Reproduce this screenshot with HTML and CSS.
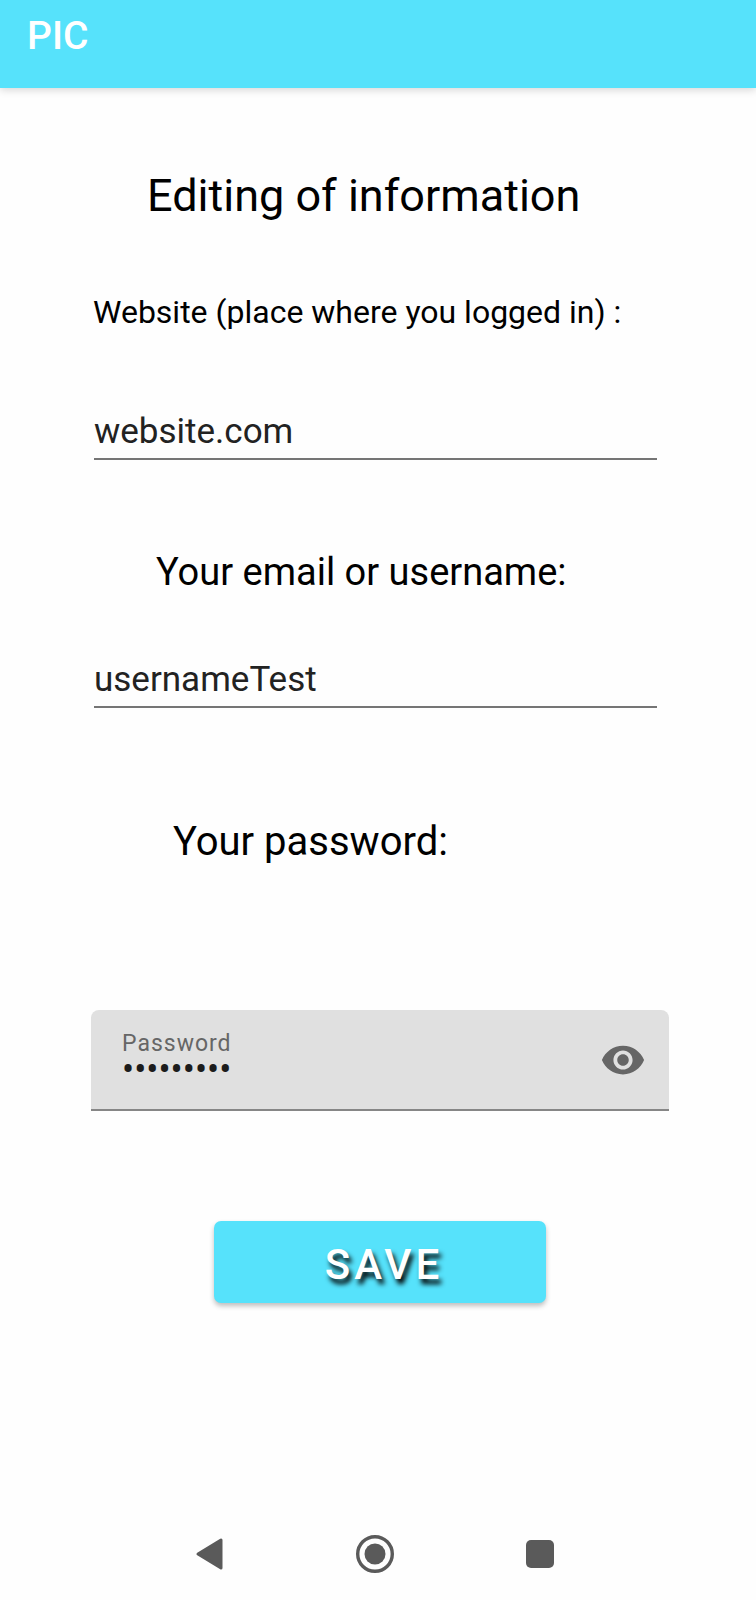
FILE: index.html
```html
<!DOCTYPE html>
<html lang="en">
<head>
<meta charset="utf-8">
<meta name="viewport" content="width=device-width, initial-scale=1">
<title>PIC</title>
<link rel="stylesheet" href="styles.css">
</head>
<body>
<header class="app-bar">
  <span class="app-title">PIC</span>
</header>
<main class="content">
  <h1 class="heading">Editing of information</h1>
  <form class="form">
    <div class="field">
      <label class="label label-website" for="website">Website (place where you logged in) :</label>
      <input class="line-input" id="website" type="text" value="website.com">
    </div>
    <div class="field">
      <label class="label label-username" for="username">Your email or username:</label>
      <input class="line-input" id="username" type="text" value="usernameTest" autocomplete="off">
    </div>
    <h2 class="label label-password">Your password:</h2>
    <div class="password-box">
      <div class="password-field">
        <label class="password-label" for="password">Password</label>
        <input class="password-input" id="password" type="password" value="secret123" autocomplete="off">
      </div>
      <button class="eye-button" type="button" aria-label="Show password">
        <svg class="eye-icon" viewBox="0 0 24 24" aria-hidden="true"><path d="M12 4.500C7 4.500 2.730 7.610 1 12c1.730 4.390 6 7.500 11 7.500s9.270-3.110 11-7.500c-1.730-4.390-6-7.500-11-7.500zM12 17c-2.760 0-5-2.240-5-5s2.240-5 5-5 5 2.240 5 5-2.240 5-5 5zm0-8c-1.660 0-3 1.340-3 3s1.340 3 3 3 3-1.340 3-3-1.340-3-3-3z"/></svg>
      </button>
    </div>
    <button class="save-button" type="submit">SAVE</button>
  </form>
</main>
<nav class="nav-bar" aria-label="System">
  <button class="nav-button" type="button" aria-label="Back">
    <svg class="nav-icon" viewBox="0 0 40 40" aria-hidden="true"><path d="M8 20 31 6V34Z" stroke-width="3" stroke-linejoin="round"/></svg>
  </button>
  <button class="nav-button" type="button" aria-label="Home">
    <svg class="nav-icon" viewBox="0 0 40 40" aria-hidden="true"><circle cx="20" cy="20" r="10.500" stroke="none"/><circle cx="20" cy="20" r="17.300" fill="none" stroke-width="3.400"/></svg>
  </button>
  <button class="nav-button" type="button" aria-label="Recent apps">
    <svg class="nav-icon" viewBox="0 0 40 40" aria-hidden="true"><rect x="6" y="6" width="28" height="28" rx="5" stroke="none"/></svg>
  </button>
</nav>
</body>
</html>
```
FILE: styles.css
```css
* {
  box-sizing: border-box;
}

body {
  margin: 0;
  min-height: 100vh;
  display: flex;
  flex-direction: column;
  background: #fefefe;
  color: #000;
  font-family: Roboto, "Liberation Sans", sans-serif;
}

button,
input {
  border: 0;
  padding: 0;
  background: none;
  font-family: inherit;
}

.app-bar {
  height: 88px;
  padding: 12px 27px;
  background: #56e2fb;
  box-shadow: 0 2px 8px rgba(0, 0, 0, 0.16);
}

.app-title {
  color: #fff;
  font-size: 39px;
  font-weight: 500;
  line-height: 48px;
}

.content {
  flex: 1;
  padding: 80px 87px 0 91px;
}

.heading {
  margin: 0;
  padding-left: 56px;
  font-size: 45px;
  font-weight: 400;
  line-height: 56px;
}

.form {
  display: flex;
  flex-direction: column;
}

.field {
  display: flex;
  flex-direction: column;
}

.label {
  margin: 0;
  font-weight: 400;
  line-height: 48px;
}

.label-website {
  margin-top: 64px;
  padding-left: 2px;
  font-size: 32px;
}

.label-username {
  margin-top: 88px;
  padding-left: 65px;
  font-size: 38px;
}

.label-password {
  margin-top: 110px;
  padding-left: 82px;
  font-size: 40px;
}

.line-input {
  height: 56px;
  margin: 0 12px 0 3px;
  border-bottom: 2px solid #757575;
  color: #222;
  font-size: 35px;
}

.label-website + .line-input {
  margin-top: 68px;
}

.label-username + .line-input {
  margin-top: 56px;
}

.password-box {
  display: flex;
  align-items: center;
  justify-content: space-between;
  height: 101px;
  margin-top: 144px;
  padding: 0 23px 0 31px;
  border-bottom: 2px solid #868686;
  border-radius: 8px 8px 0 0;
  background: #e0e0e0;
}

.password-field {
  flex: 1;
  display: flex;
  flex-direction: column;
  padding-bottom: 8px;
}

.password-label {
  color: #666;
  font-size: 23px;
  letter-spacing: 1px;
  line-height: 28px;
}

.password-input {
  width: 100%;
  height: 24px;
  color: #1c1c1c;
  font-size: 36px;
}

.eye-button {
  display: flex;
}

.eye-icon {
  width: 46px;
  height: 46px;
  fill: #666;
}

.save-button {
  align-self: center;
  width: 332px;
  height: 82px;
  margin-top: 110px;
  padding: 4px 0 0 8px;
  border-radius: 7px;
  background: #56e2fb;
  box-shadow: 0 3px 5px rgba(0, 0, 0, 0.25);
  color: #fff;
  font-size: 42px;
  font-weight: 500;
  letter-spacing: 4px;
  text-shadow: 3px 5px 5px #000;
}

.nav-bar {
  display: flex;
  justify-content: center;
  gap: 125px;
  padding: 26px 6px 26px 0;
}

.nav-button {
  display: flex;
}

.nav-icon {
  width: 40px;
  height: 40px;
  fill: #5a5a5a;
  stroke: #5a5a5a;
}
```
